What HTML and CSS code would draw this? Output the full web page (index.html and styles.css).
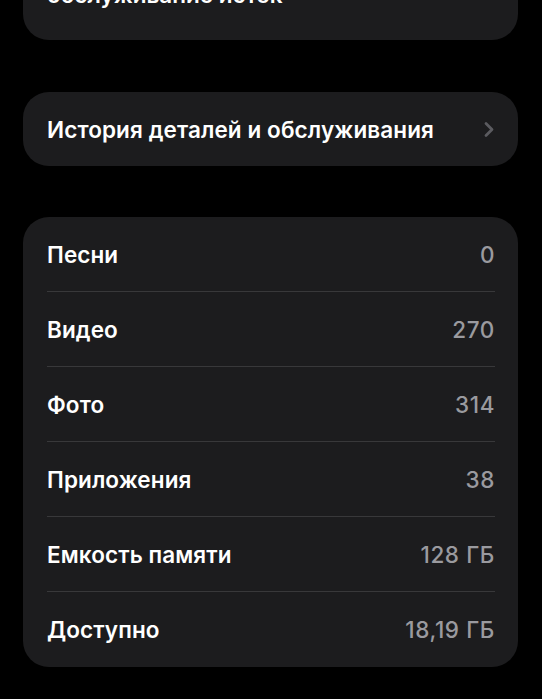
FILE: index.html
```html
<!DOCTYPE html>
<html lang="ru">
<head>
<meta charset="utf-8">
<link rel="stylesheet" href="styles.css">
</head>
<body>
<div class="page">
  <div class="card card-top">
    <div class="top-text">обслуживание истек</div>
  </div>
  <div class="card card-link">
    <span class="label">История деталей и обслуживания</span>
    <svg class="chevron" width="12" height="17" viewBox="0 0 12 17"><path d="M3 2.5 L9 8.5 L3 14.5" fill="none" stroke="#5b5b60" stroke-width="2.8" stroke-linecap="round" stroke-linejoin="round"/></svg>
  </div>
  <div class="card card-list">
    <div class="row"><span class="label">Песни</span><span class="value">0</span></div>
    <div class="row"><span class="label">Видео</span><span class="value">270</span></div>
    <div class="row"><span class="label">Фото</span><span class="value">314</span></div>
    <div class="row"><span class="label">Приложения</span><span class="value">38</span></div>
    <div class="row"><span class="label">Емкость памяти</span><span class="value">128 ГБ</span></div>
    <div class="row"><span class="label">Доступно</span><span class="value">18,19 ГБ</span></div>
  </div>
</div>
</body>
</html>
```
FILE: styles.css
```css
html, body {
  margin: 0;
  padding: 0;
  background: #000;
  height: 100%;
  overflow: hidden;
}
body {
  font-family: Inter, "Open Sans", "Liberation Sans", sans-serif;
  color: #fff;
  -webkit-font-smoothing: antialiased;
}
.page {
  display: flex;
  flex-direction: column;
  padding: 0 24px 0 23px;
  margin-top: -44px;
}
.card {
  background: #1c1c1e;
  border-radius: 26px;
}
.card-top {
  padding: 26px 24px 32px;
}
.top-text {
  font-size: 22.5px;
  font-weight: 600;
  line-height: 26px;
}
.card-link {
  margin-top: 52px;
  height: 74px;
  display: flex;
  align-items: center;
  justify-content: space-between;
  padding: 0 23px 0 24px;
}
.label {
  font-size: 22.5px;
  font-weight: 600;
  letter-spacing: 0.1px;
}
.card-list {
  margin-top: 51px;
  padding: 0 23px 0 24px;
}
.row {
  height: 74px;
  display: flex;
  align-items: center;
  justify-content: space-between;
  border-bottom: 1px solid #38383a;
}
.row:last-child {
  border-bottom: none;
  height: 75px;
}
.value {
  font-size: 22.5px;
  font-weight: 500;
  letter-spacing: 0.6px;
  color: #9a9a9f;
}
```
